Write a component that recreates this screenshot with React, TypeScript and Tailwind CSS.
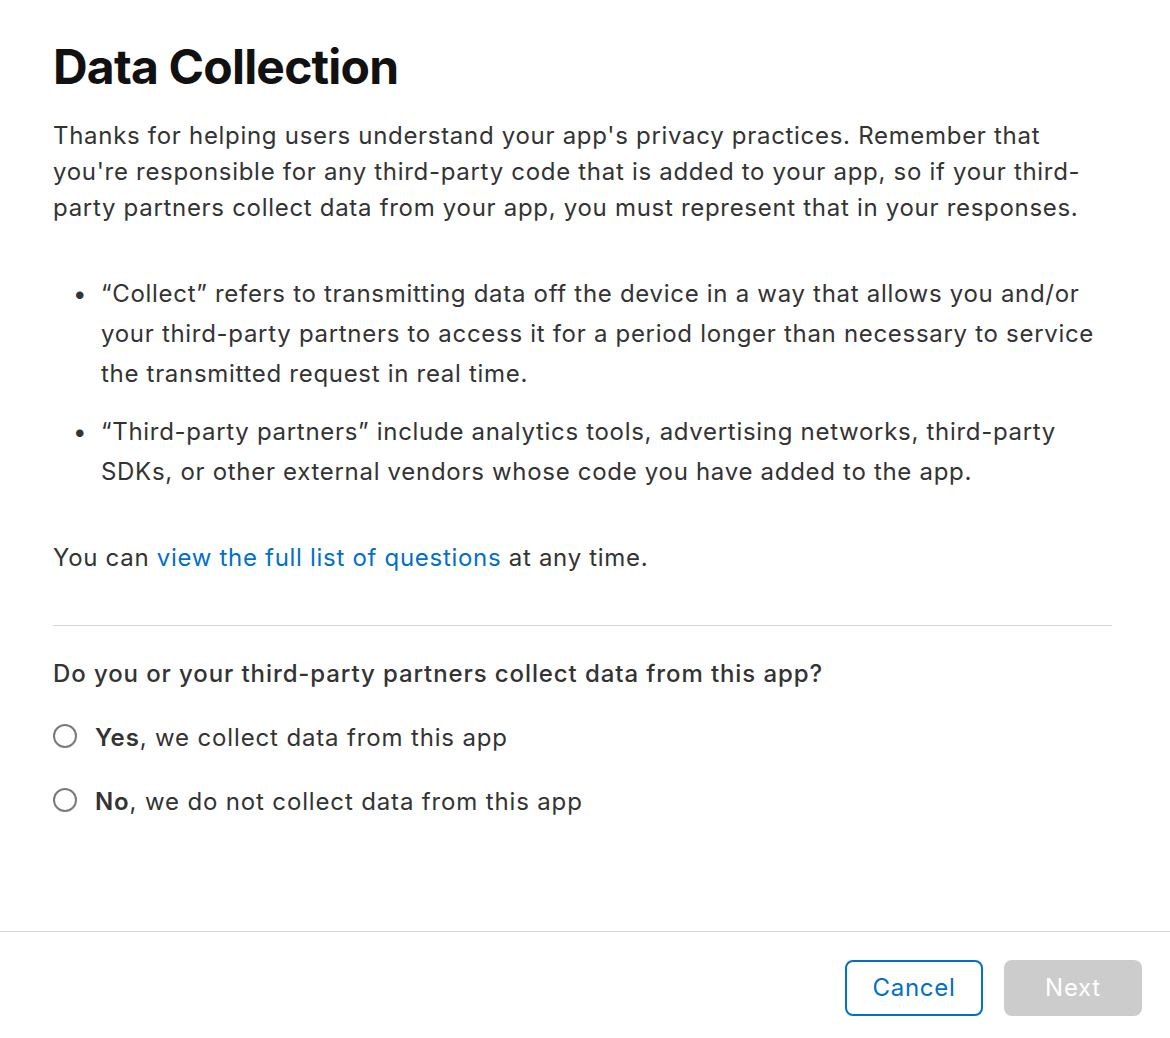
import React from "react";

export default function App() {
  return (
    <div
      className="min-h-[1038px] flex flex-col bg-white text-[#333333] tracking-[0.7px]"
      style={{ fontFamily: "Inter, 'Noto Sans', sans-serif" }}
    >
      <div className="flex-1 pl-[53px] pr-[40px] pt-[38px]">
        <h1 className="text-[48px] leading-[58px] font-bold text-[#111111] tracking-[-0.8px]">
          Data Collection
        </h1>
        <p className="mt-[22px] text-[24px] leading-[36px] whitespace-nowrap">
          Thanks for helping users understand your app's privacy practices. Remember that
          <br />
          you're responsible for any third-party code that is added to your app, so if your third-
          <br />
          party partners collect data from your app, you must represent that in your responses.
        </p>
        <ul className="mt-[48px] flex flex-col gap-[18px] text-[24px] leading-[40px]">
          <li className="flex">
            <span className="w-[48px] shrink-0 flex justify-center pl-[6px]">•</span>
            <span className="whitespace-nowrap">
              “Collect” refers to transmitting data off the device in a way that allows you and/or
              <br />
              your third-party partners to access it for a period longer than necessary to service
              <br />
              the transmitted request in real time.
            </span>
          </li>
          <li className="flex">
            <span className="w-[48px] shrink-0 flex justify-center pl-[6px]">•</span>
            <span className="whitespace-nowrap">
              “Third-party partners” include analytics tools, advertising networks, third-party
              <br />
              SDKs, or other external vendors whose code you have added to the app.
            </span>
          </li>
        </ul>
        <p className="mt-[48px] text-[24px] leading-[36px]">
          You can <a className="text-[#0070c9]">view the full list of questions</a> at any time.
        </p>
        <div className="mt-[49px] mr-[18px] h-px bg-[#d6d6d6]" />
        <p className="mt-[30px] text-[24px] leading-[36px] font-medium tracking-[0.9px]">
          Do you or your third-party partners collect data from this app?
        </p>
        <div className="mt-[28px] flex flex-col gap-[28px]">
          <label className="flex items-center gap-[18px] text-[24px] leading-[36px] tracking-[0.85px]">
            <span className="w-[24px] h-[24px] rounded-full border-[2px] border-[#7a7a7a] shrink-0 -mt-[4px]" />
            <span>
              <b className="font-semibold">Yes</b>, we collect data from this app
            </span>
          </label>
          <label className="flex items-center gap-[18px] text-[24px] leading-[36px] tracking-[0.85px]">
            <span className="w-[24px] h-[24px] rounded-full border-[2px] border-[#7a7a7a] shrink-0 -mt-[4px]" />
            <span>
              <b className="font-semibold">No</b>, we do not collect data from this app
            </span>
          </label>
        </div>
      </div>
      <div className="border-t border-[#d6d6d6] flex justify-end gap-[21px] pt-[28px] pb-[22px] pr-[28px]">
        <button className="w-[138px] h-[56px] rounded-[8px] border-[2px] border-[#0070c9] text-[#0070c9] text-[24px]">
          Cancel
        </button>
        <button className="w-[138px] h-[56px] rounded-[8px] bg-[#cccccc] text-white text-[24px]">
          Next
        </button>
      </div>
    </div>
  );
}
